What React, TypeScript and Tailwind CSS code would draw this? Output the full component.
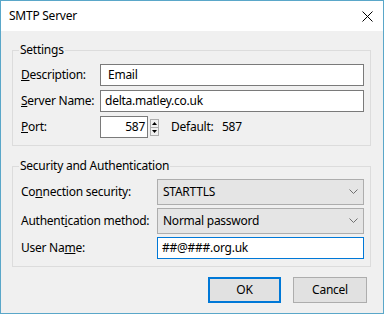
import React from 'react';

const font = { fontFamily: '"Noto Sans", "Liberation Sans", sans-serif' };

function Chevron() {
  return (
    <svg width="9" height="6" viewBox="0 0 9 6" className="shrink-0">
      <path d="M0.5 0.5 L4.5 4.5 L8.5 0.5" fill="none" stroke="#707070" strokeWidth="1" />
    </svg>
  );
}

function Select({ value }: { value: string }) {
  return (
    <div className="flex h-[26px] w-[207px] items-center justify-between border border-[#adadad] bg-[#e5e5e5] pl-[5px] pr-[5px]">
      <span>{value}</span>
      <Chevron />
    </div>
  );
}

function Row({ label, children, labelWidth }: { label: React.ReactNode; children: React.ReactNode; labelWidth: string }) {
  return (
    <div className="flex items-center">
      <div className={labelWidth}>{label}</div>
      {children}
    </div>
  );
}

export default function App() {
  return (
    <div className="flex h-[314px] w-[384px] flex-col border border-[#5aa7c9] bg-[#f0f0f0] text-[12px] leading-4 tracking-[-0.25px] text-black" style={font}>
      {/* Title bar */}
      <div className="flex h-[30px] items-center justify-between bg-white pl-[8px] pr-[10px]">
        <span>SMTP Server</span>
        <svg width="11" height="11" viewBox="0 0 11 11">
          <path d="M0.5 0.5 L10.5 10.5 M10.5 0.5 L0.5 10.5" stroke="#000" strokeWidth="1" />
        </svg>
      </div>

      {/* Settings */}
      <fieldset className="ml-[11px] mt-[11px] w-[359px] border border-[#dcdcdc] pb-[7px] pl-[8px] pr-[6px] pt-[6px]">
        <legend className="ml-[-2px] px-[1px]">Settings</legend>
        <div className="flex flex-col gap-[4px]">
          <Row labelWidth="w-[79px]" label={<><u>D</u>escription:</>}>
            <div className="flex h-[22px] w-[264px] items-center border border-[#7a7a7a] bg-white pl-[7px]">Email</div>
          </Row>
          <Row labelWidth="w-[79px]" label={<><u>S</u>erver Name:</>}>
            <div className="flex h-[22px] w-[264px] items-center border border-[#7a7a7a] bg-white pl-[4px]">delta.matley.co.uk</div>
          </Row>
          <Row labelWidth="w-[79px]" label={<><u>P</u>ort:</>}>
            <div className="flex h-[22px] w-[48px] items-center justify-end border border-[#7a7a7a] bg-white pr-[2px]">587</div>
            <div className="ml-[2px] flex h-[17px] w-[9px] flex-col border border-[#adadad] bg-[#f0f0f0]">
              <div className="flex flex-1 items-center justify-center border-b border-[#adadad]">
                <svg width="5" height="3" viewBox="0 0 5 3"><path d="M0 3 L2.5 0 L5 3 Z" fill="#000" /></svg>
              </div>
              <div className="flex flex-1 items-center justify-center">
                <svg width="5" height="3" viewBox="0 0 5 3"><path d="M0 0 L2.5 3 L5 0 Z" fill="#000" /></svg>
              </div>
            </div>
            <span className="ml-[12px] w-[51px]">Default:</span>
            <span>587</span>
          </Row>
        </div>
      </fieldset>

      {/* Security and Authentication */}
      <fieldset className="ml-[11px] mt-[12px] w-[359px] border border-[#dcdcdc] pb-[7px] pl-[8px] pr-[6px] pt-[5px]">
        <legend className="ml-[-2px] px-[1px]">Security and Authentication</legend>
        <div className="flex flex-col gap-[3px]">
          <Row labelWidth="w-[136px]" label={<>Co<u>n</u>nection security:</>}>
            <Select value="STARTTLS" />
          </Row>
          <Row labelWidth="w-[136px]" label={<>Authent<u>i</u>cation method:</>}>
            <Select value="Normal password" />
          </Row>
          <Row labelWidth="w-[136px]" label={<>User Na<u>m</u>e:</>}>
            <div className="flex h-[22px] w-[207px] items-center border border-[#0078d7] bg-white pl-[4px]">##@###.org.uk</div>
          </Row>
        </div>
      </fieldset>

      {/* Buttons */}
      <div className="mt-[10px] flex justify-end gap-[12px] pr-[16px]">
        <button className="flex h-[26px] w-[73px] items-center justify-center border-2 border-[#0078d7] bg-[#e1e1e1]">OK</button>
        <button className="flex h-[26px] w-[74px] items-center justify-center border border-[#adadad] bg-[#e1e1e1]">Cancel</button>
      </div>
    </div>
  );
}
